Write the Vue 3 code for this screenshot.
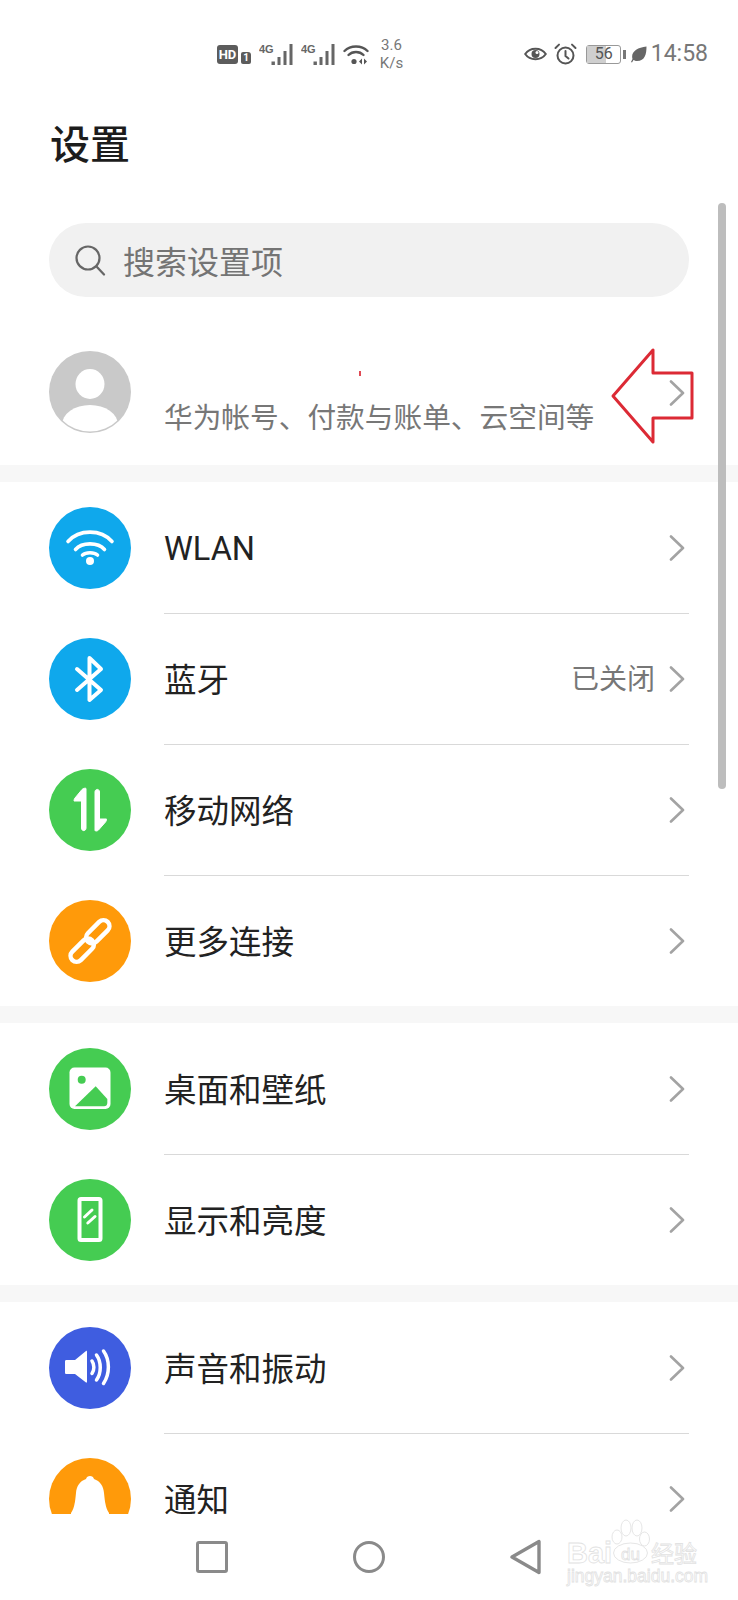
<template>
  <div class="page">
    <!-- status bar -->
    <div class="status">
      <span class="hd">HD</span>
      <span class="sim">1</span>
      <svg v-for="n in 2" :key="n" class="signal" width="36" height="24" viewBox="0 0 36 24">
        <text x="0" y="10" class="sig-text">4G</text>
        <rect x="12.500" y="18.500" width="3.400" height="3.500" fill="#666" />
        <rect x="18.500" y="14" width="3" height="8" fill="#666" />
        <rect x="24.500" y="8" width="3" height="14" fill="#666" />
        <rect x="30.500" y="1" width="3" height="21" fill="#666" />
      </svg>
      <svg class="wifi" width="26" height="22" viewBox="0 0 26 22" fill="none" stroke="#555" stroke-linecap="round">
        <path d="M1.500 7C7.500 1 18.500 1 24.500 7" stroke-width="2.400" />
        <path d="M5.500 11C9.500 7 16.500 7 20.500 11" stroke-width="2.400" />
        <circle cx="11" cy="17.500" r="2.600" fill="#555" stroke="none" />
        <path d="M19 14.500l-3 3 3 3zM21 14.500l3 3-3 3z" fill="#555" stroke="none" />
      </svg>
      <div class="speed">
        <span>3.6</span>
        <span>K/s</span>
      </div>
      <div class="status-right">
        <svg width="23" height="16" viewBox="0 0 23 16" fill="none" stroke="#555">
          <path d="M1.200 8C6 1 17 1 21.800 8C17 15 6 15 1.200 8Z" stroke-width="2" />
          <circle cx="11.500" cy="8" r="4" fill="#555" stroke="none" />
          <circle cx="13" cy="6.600" r="1.500" fill="#fff" stroke="none" />
        </svg>
        <svg class="alarm" width="23" height="22" viewBox="0 0 23 22" fill="none" stroke="#555" stroke-width="2" stroke-linecap="round">
          <circle cx="11.500" cy="12.500" r="8" />
          <path d="M11.500 8v5l3 2.500M1.500 5L5 1.600M21.500 5L18 1.600" />
        </svg>
        <div class="battery">
          <div class="battery-fill"></div>
          <span>56</span>
        </div>
        <i class="battery-nub"></i>
        <svg class="leaf" width="16" height="17" viewBox="0 0 16 17">
          <path d="M15.500 0.500C15.500 8 14 15 6 15C4.500 15 3.500 14.500 2.500 14L1 16.500L0 16L1.500 13C-0.500 6 6 1.500 15.500 0.500Z" fill="#666" />
        </svg>
        <span class="clock">14:58</span>
      </div>
    </div>

    <h1 class="title">设置</h1>

    <div class="search">
      <svg width="32" height="32" viewBox="0 0 32 32" fill="none" stroke="#666" stroke-width="2.200" stroke-linecap="round">
        <circle cx="14" cy="14" r="11.500" />
        <path d="M22.500 22.500L30 30.500" />
      </svg>
      <span>搜索设置项</span>
    </div>

    <div class="content">
      <div class="profile">
        <svg class="circle" viewBox="0 0 82 82">
          <defs>
            <clipPath id="avatar-clip"><circle cx="41" cy="41" r="39.500" /></clipPath>
          </defs>
          <circle cx="41" cy="41" r="41" fill="#c9c9c9" />
          <ellipse cx="41" cy="33" rx="14.500" ry="15" fill="#fff" />
          <g clip-path="url(#avatar-clip)">
            <ellipse cx="41" cy="74" rx="28" ry="20" fill="#fff" />
          </g>
        </svg>
        <div class="profile-text">
          <i class="red-mark"></i>
          <span class="sub">华为帐号、付款与账单、云空间等</span>
        </div>
        <svg class="chevron" width="16" height="26" viewBox="0 0 16 26" fill="none" stroke="#a3a3a3" stroke-width="2.600" stroke-linecap="round" stroke-linejoin="round">
          <path d="M2 1.500L14 13L2 24.500" />
        </svg>
      </div>

      <div v-for="(group, g) in groups" :key="g" class="group">
        <div v-for="(row, i) in group" :key="row.label" class="row">
          <svg class="circle" viewBox="0 0 82 82">
            <circle cx="41" cy="41" r="41" :fill="row.color" />
            <g v-if="row.icon === 'wifi'" fill="none" stroke="#fff" stroke-width="3.600" stroke-linecap="round">
              <path d="M19 34.500C30 22 52 22 63 34.500" />
              <path d="M26.500 42.500C33 35 49 35 55.500 42.500" />
              <path d="M33.500 48C37 45 45 45 48.500 48" />
              <circle cx="41" cy="54" r="4" fill="#fff" stroke="none" />
            </g>
            <path v-else-if="row.icon === 'bluetooth'" d="M28 31L52 52L40.500 62V20L52 31L28 52" fill="none" stroke="#fff" stroke-width="4" stroke-linecap="round" stroke-linejoin="round" />
            <g v-else-if="row.icon === 'mobile'" fill="#fff" stroke="#fff" stroke-width="1" stroke-linejoin="round">
              <path d="M37 19.500V59C37 62.500 32.500 62.500 32.500 59V32H25C25 32 25 30 26 29L33 20.500C34.500 19 37 19 37 19.500Z" />
              <path d="M46 61.500V23C46 19.500 50.500 19.500 50.500 23V50H57.500C57.500 50 57.500 52 56.500 53L49.500 61C48 62.500 46 62 46 61.500Z" />
            </g>
            <g v-else-if="row.icon === 'link'" fill="none" stroke="#fff" stroke-width="4.500" transform="rotate(-45 41 41)">
              <rect x="15" y="36" width="28" height="12" rx="6" />
              <rect x="39" y="34" width="28" height="12" rx="6" />
            </g>
            <g v-else-if="row.icon === 'image'">
              <rect x="20.500" y="19.500" width="41" height="41.500" rx="5" fill="#fff" />
              <circle cx="32.700" cy="31.700" r="4" :fill="row.color" />
              <path d="M26 58.300L46.700 38.300L58.300 51V55C58.300 57 57 58.300 55 58.300Z" :fill="row.color" />
            </g>
            <g v-else-if="row.icon === 'display'" fill="none" stroke="#fff" stroke-linecap="round">
              <rect x="30.500" y="20" width="21" height="41" rx="1.500" stroke-width="4" />
              <path d="M35.500 38L43 31M38.800 44L46 37.500" stroke-width="3" />
            </g>
            <g v-else-if="row.icon === 'sound'">
              <path d="M17.500 33H26L37 24C37.500 23.500 38 24 38 25V54.500C38 55.500 37.500 56 37 55.500L26 47H17.500C16.500 47 16 46.500 16 45.500V34.500C16 33.500 16.500 33 17.500 33Z" fill="#fff" />
              <path d="M43 34C45.500 37.500 45.500 43 43 46.500M47.500 28C52.500 35 52.500 46 47.500 53M54.500 24C61 33 61 47 54.500 56.500" fill="none" stroke="#fff" stroke-width="3.500" stroke-linecap="round" />
            </g>
            <path v-else-if="row.icon === 'bell'" d="M41 18C43 18 44.500 19 45 21C51 23 54.500 28 55 35C55.500 40 56 44 56.500 46C57 49 58 52 60 55V70H22V55C24 52 25 49 25.500 46C26 44 26.500 40 27 35C27.500 28 31 23 37 21C37.500 19 39 18 41 18Z" fill="#fff" />
          </svg>
          <div class="row-main" :class="{ last: i === group.length - 1 }">
            <span class="label" :class="{ latin: row.icon === 'wifi' }">{{ row.label }}</span>
            <span v-if="row.value" class="value">{{ row.value }}</span>
            <svg class="chevron" width="16" height="26" viewBox="0 0 16 26" fill="none" stroke="#a3a3a3" stroke-width="2.600" stroke-linecap="round" stroke-linejoin="round">
              <path d="M2 1.500L14 13L2 24.500" />
            </svg>
          </div>
        </div>
      </div>
    </div>

    <div class="nav">
      <i class="nav-square"></i>
      <i class="nav-circle"></i>
      <svg width="32" height="36" viewBox="0 0 32 36" fill="none" stroke="#8a8a8a" stroke-width="3.400" stroke-linejoin="round">
        <path d="M29 2.500V33.500L2 18Z" />
      </svg>
    </div>

    <!-- overlays -->
    <div class="scrollbar"></div>
    <svg class="arrow" width="86" height="100" viewBox="0 0 86 100" fill="none" stroke="#dc2a35" stroke-width="3" stroke-linejoin="round">
      <path d="M4 49L44 3V26H83V71H44V95Z" />
    </svg>
    <div class="watermark">
      <svg class="paw" width="42" height="46" viewBox="0 0 42 46" fill="#fff" stroke="#e6e6e6" stroke-width="1">
        <ellipse cx="6" cy="18" rx="5" ry="7" />
        <ellipse cx="15" cy="9" rx="5" ry="8" />
        <ellipse cx="26" cy="9" rx="5" ry="8" />
        <ellipse cx="33.500" cy="20" rx="5" ry="7" />
        <ellipse cx="19.500" cy="34" rx="17" ry="10" />
      </svg>
      <span class="wm-bai">Bai</span>
      <span class="wm-du">du</span>
      <span class="wm-jy">经验</span>
      <span class="wm-url">jingyan.baidu.com</span>
    </div>
  </div>
</template>

<script setup>
const groups = [
  [
    { label: 'WLAN', icon: 'wifi', color: '#0fa8ec' },
    { label: '蓝牙', icon: 'bluetooth', color: '#0fa8ec', value: '已关闭' },
    { label: '移动网络', icon: 'mobile', color: '#45cc52' },
    { label: '更多连接', icon: 'link', color: '#ff9a0a' }
  ],
  [
    { label: '桌面和壁纸', icon: 'image', color: '#45cc52' },
    { label: '显示和亮度', icon: 'display', color: '#45cc52' }
  ],
  [
    { label: '声音和振动', icon: 'sound', color: '#3f5de0' },
    { label: '通知', icon: 'bell', color: '#ff9a0a' }
  ]
]
</script>

<style>
html,
body {
  background: #fff;
}
</style>

<style scoped>
.page {
  position: relative;
  width: 738px;
  height: 1600px;
  display: flex;
  flex-direction: column;
  overflow: hidden;
  background: #fff;
  font-family: Roboto, "Noto Sans CJK SC", sans-serif;
  color: #222;
}
.status {
  height: 96px;
  flex: none;
  display: flex;
  align-items: flex-start;
  padding: 43px 30px 0 217px;
  box-sizing: border-box;
  color: #666;
}
.hd {
  width: 21px;
  height: 19px;
  margin-top: 2px;
  background: #5c5c5c;
  color: #fff;
  border-radius: 3px;
  font: 700 13px/19px Roboto, sans-serif;
  text-align: center;
}
.sim {
  width: 10px;
  height: 12px;
  margin: 9px 0 0 3px;
  background: #5c5c5c;
  color: #fff;
  border-radius: 2px 3px 2px 2px;
  font: 700 10px/12px Roboto, sans-serif;
  text-align: center;
}
.signal {
  margin: 0 0 0 8px;
}
.signal + .signal {
  margin-left: 6px;
}
.sig-text {
  font: 700 11px "Liberation Sans Narrow", "Liberation Sans", sans-serif;
  fill: #666;
}
.wifi {
  margin: 1px 0 0 6px;
}
.speed {
  display: flex;
  flex-direction: column;
  width: 25px;
  margin: -7px 0 0 10px;
  font: 400 15px/18px Roboto, sans-serif;
  color: #777;
  text-align: center;
}
.status-right {
  margin-left: auto;
  display: flex;
  align-items: center;
  height: 22px;
}
.alarm {
  margin-left: 7px;
}
.battery {
  position: relative;
  width: 35px;
  height: 19px;
  margin-left: 9px;
  box-sizing: border-box;
  border: 1.500px solid #999;
  border-radius: 3px;
  text-align: center;
  font: 400 16px/16px Roboto, sans-serif;
  color: #555;
}
.battery span {
  position: relative;
}
.battery-fill {
  position: absolute;
  left: 0;
  top: 0;
  bottom: 0;
  width: 56%;
  background: #cfcfcf;
}
.battery-nub {
  width: 2.500px;
  height: 9px;
  margin-left: 2px;
  background: #777;
}
.leaf {
  margin-left: 5px;
}
.clock {
  margin-left: 4px;
  font-size: 23px;
  line-height: 22px;
  color: #777;
}
.title {
  flex: none;
  height: 100px;
  margin: 0 0 27px;
  padding-left: 50px;
  font-size: 40px;
  font-weight: 500;
  line-height: 100px;
  color: #1c1c1c;
}
.search {
  flex: none;
  height: 74px;
  margin: 0 49px;
  padding-left: 25px;
  display: flex;
  align-items: center;
  gap: 17px;
  background: #f1f1f1;
  border-radius: 37px;
  font-size: 32px;
  color: #747474;
}
.content {
  flex: 1;
  min-height: 0;
  overflow: hidden;
}
.circle {
  flex: none;
  width: 82px;
  height: 82px;
}
.profile {
  position: relative;
  height: 168px;
  padding: 54px 53px 0 49px;
  box-sizing: border-box;
  display: flex;
  align-items: flex-start;
}
.profile .chevron {
  margin-top: 29px;
}
.profile-text {
  flex: 1;
  position: relative;
  margin-left: 33px;
  height: 82px;
}
.red-mark {
  position: absolute;
  left: 195px;
  top: 20px;
  width: 1.500px;
  height: 5px;
  background: #e04a55;
}
.sub {
  position: absolute;
  left: 0;
  top: 46px;
  font-size: 28.700px;
  line-height: 42px;
  color: #777;
  white-space: nowrap;
}
.group {
  border-top: 17px solid #f7f7f7;
}
.row {
  display: flex;
  align-items: center;
  height: 131px;
  padding-left: 49px;
}
.row-main {
  flex: 1;
  height: 100%;
  margin: 0 49px 0 33px;
  display: flex;
  align-items: center;
  box-shadow: 0 1px 0 #d9d9d9;
  padding-right: 4px;
}
.row-main.last {
  box-shadow: none;
}
.label {
  flex: 1;
  padding-top: 4px;
  font-size: 32.500px;
  line-height: 28px;
  color: #222;
}
.label.latin {
  padding-top: 2px;
}
.value {
  margin-right: 14px;
  padding-top: 2px;
  font-size: 28px;
  line-height: 28px;
  color: #777;
}
.chevron {
  flex: none;
}
.nav {
  position: relative;
  flex: none;
  height: 86px;
  margin-top: -4px;
  display: flex;
  align-items: center;
  justify-content: center;
  gap: 125px;
  background: #fff;
}
.nav-square {
  width: 32px;
  height: 32px;
  box-sizing: border-box;
  border: 3.400px solid #8a8a8a;
  border-radius: 3px;
}
.nav-circle {
  width: 32px;
  height: 32px;
  box-sizing: border-box;
  border: 3.400px solid #8a8a8a;
  border-radius: 50%;
}
.scrollbar {
  position: absolute;
  left: 718px;
  top: 203px;
  width: 8px;
  height: 586px;
  border-radius: 4px;
  background: #bdbdbd;
}
.arrow {
  position: absolute;
  left: 609px;
  top: 347px;
}
.watermark {
  position: absolute;
  left: 567px;
  top: 1518px;
  width: 132px;
  height: 66px;
  color: #fff;
  -webkit-text-stroke: 0.800px #e2e2e2;
  font-family: "Liberation Sans", sans-serif;
}
.paw {
  position: absolute;
  left: 44px;
  top: 1px;
}
.wm-bai {
  position: absolute;
  left: 0;
  top: 23px;
  font-size: 29px;
  font-weight: 700;
  line-height: 25px;
}
.wm-du {
  position: absolute;
  left: 54px;
  top: 28px;
  font-size: 17px;
  line-height: 18px;
}
.wm-jy {
  position: absolute;
  left: 84px;
  top: 22px;
  font-family: "Noto Sans CJK SC", sans-serif;
  font-size: 23px;
  line-height: 24px;
}
.wm-url {
  position: absolute;
  left: 0;
  top: 48px;
  font-size: 17.500px;
  line-height: 20px;
  white-space: nowrap;
}
</style>
